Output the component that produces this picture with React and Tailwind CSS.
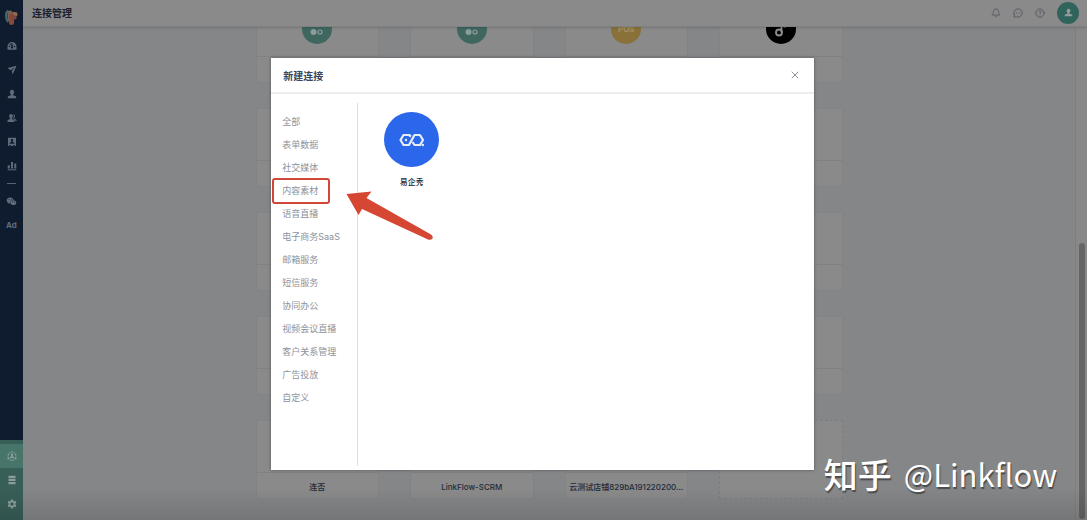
import React from "react";
import { Bell, MessageCircleMore, CircleHelp, X } from "lucide-react";
import { AiFillWechat } from "react-icons/ai";

const Svg = ({ className, children, box = "0 0 20 20" }) => (
  <svg viewBox={box} className={className} fill="currentColor" aria-hidden="true">
    {children}
  </svg>
);

const PersonShape = () => (
  <path d="M10 1.500c-2.600 0-4.200 1.900-4.200 4.400 0 2 .8 3.900 2.200 5v1.600L3.400 14C1.800 14.600 1.500 16 1.500 18.500h17c0-2.500-.3-3.900-1.900-4.500L12 12.500v-1.600c1.400-1.100 2.200-3 2.200-5 0-2.500-1.600-4.400-4.200-4.400z" />
);

const glyphs = {
  dashboard: (
    <path fillRule="evenodd" d="M10 2a9 9 0 0 0-9 9v6.500h18V11a9 9 0 0 0-9-9zM5 9.500a1.500 1.500 0 1 1 0 3 1.500 1.500 0 0 1 0-3zM6.500 5a1.500 1.500 0 1 1 0 3 1.500 1.500 0 0 1 0-3zM15 9.500a1.500 1.500 0 1 1 0 3 1.500 1.500 0 0 1 0-3zM9 4.500h2l.6 7a2.200 2.200 0 1 1-3.200 0z" />
  ),
  send: <path d="M19 1.500 1 6l6 4.500L15 5 9.500 12l1.800 7z" />,
  person: <PersonShape />,
  people: (
    <>
      <path d="M8 2C5.600 2 4.300 3.700 4.300 6c0 1.800.7 3.400 1.900 4.400V12l-3.700 1.500C1.200 14 .8 15.500.8 18h14.400c0-2.500-.4-4-1.700-4.500L9.800 12v-1.600c1.200-1 1.900-2.600 1.900-4.400C11.700 3.700 10.400 2 8 2z" />
      <path d="M12.500 2.500c2.300 0 3.600 1.400 3.600 3.600 0 1.600-.7 3-1.700 3.900v1.200l3 1.300c1.300.6 1.800 1.500 1.800 3.500h-2.700c-.3-2-1.200-3-2.500-3.600l-1.500-.7V10c1.400-2 1.700-5 0-7.500z" />
    </>
  ),
  bookmark: (
    <path fillRule="evenodd" d="M2 1.500h16v17l-4-2.500-4 2.500L6 16l-4 2.500zM10 4C8.500 4 7.600 5 7.600 6.500c0 1 .4 2 1.100 2.600v.7L6 11c-.8.400-1 1-1 2.300h10c0-1.300-.2-1.900-1-2.300l-2.700-1.200v-.7c.7-.6 1.100-1.600 1.100-2.600C12.400 5 11.500 4 10 4z" />
  ),
  chart: <path d="M1.500 8.500h4V15h-4zM8 2h4v13H8zM14.500 5h4v10h-4zM1.500 16.700h17v1.600h-17z" />,
  hub: (
    <>
      <circle cx="10" cy="7.500" r="2.300" />
      <path d="M5.800 14c.2-2.700 2-3.700 4.200-3.700s4 1 4.200 3.700z" />
      <path d="M7 2.500A8 8 0 0 0 2 11M13 2.500A8 8 0 0 1 18 11M5 17a8 8 0 0 0 10 0" fill="none" stroke="currentColor" strokeWidth="1.600" />
      <circle cx="10" cy="2" r="1.600" />
      <circle cx="2.800" cy="14.500" r="2" />
      <circle cx="17.200" cy="14.500" r="2" />
    </>
  ),
  rows: <path d="M3 1.500h14V6H3zM3 7.700h14v4.500H3zM3 14h14v4.500H3z" />,
  gear: (
    <path fillRule="evenodd" d="m8 1-.5 2.500-1.700 1L3.300 3.700l-2 3.500L3.200 9v2l-1.900 1.800 2 3.500 2.500-.8 1.700 1L8 19h4l.5-2.500 1.700-1 2.500.8 2-3.500-1.900-1.800V9l1.900-1.800-2-3.500-2.500.8-1.700-1L12 1zM10 6.600a3.400 3.400 0 1 1 0 6.800 3.400 3.400 0 0 1 0-6.800z" />
  ),
};

const NavButton = ({ name, label, active }) => (
  <button
    aria-label={label}
    className={
      active
        ? "flex h-6 w-full items-center justify-center bg-[#47756a] text-[#8fa69f]"
        : "flex h-6 w-full items-center justify-center"
    }
  >
    <Svg className="size-[10px]">{glyphs[name]}</Svg>
  </button>
);

const Logo = () => (
  <svg viewBox="0 0 26 34" className="h-[17px] w-[13px]" aria-hidden="true">
    <path d="M5 4C1 8 1 19 5 25" fill="none" stroke="#41696f" strokeWidth="4" strokeLinecap="round" />
    <rect x="5" y="3" width="10" height="22" rx="5" fill="#80604f" />
    <path d="M15 6h5.500a4.500 4.500 0 0 1 0 9H15z" fill="#8d6b4c" />
    <rect x="8" y="9" width="10" height="23" rx="5" fill="#8a473c" />
    <path d="M14 13h6a4 4 0 0 1-1 8h-4z" fill="#76493f" />
  </svg>
);

const Sidebar = () => (
  <nav className="flex w-[23px] shrink-0 flex-col bg-[#0f1c30] text-[#5f6a7a]">
    <div className="flex h-[34px] items-center justify-center">
      <Logo />
    </div>
    <NavButton name="dashboard" label="仪表盘" />
    <NavButton name="send" label="营销" />
    <NavButton name="person" label="用户" />
    <NavButton name="people" label="群组" />
    <NavButton name="bookmark" label="名片" />
    <NavButton name="chart" label="分析" />
    <hr className="mx-auto my-[5px] w-[9px] border-[#56606f]" />
    <button aria-label="微信" className="flex h-6 items-center justify-center">
      <AiFillWechat className="size-[11px]" />
    </button>
    <button className="h-6 text-[8px] leading-6 font-bold">Ad</button>
    <div className="mt-auto bg-[#385e58] pt-1 pb-1 text-[#8b9d9a]">
      <NavButton name="hub" label="连接" active />
      <NavButton name="rows" label="数据" />
      <NavButton name="gear" label="设置" />
    </div>
  </nav>
);

const Header = () => (
  <header className="relative z-10 flex h-[27px] shrink-0 items-center border-b border-[#7e7f80] bg-[#8a8a8a] pr-2 pl-[9px] shadow-sm">
    <h1 className="pb-px text-[10px] leading-4 font-bold text-[#19212f]">连接管理</h1>
    <div className="ml-auto flex items-center gap-3 pb-px text-[#4e535c]">
      <button aria-label="通知"><Bell className="size-[10px]" /></button>
      <button aria-label="消息"><MessageCircleMore className="size-[10px]" /></button>
      <button aria-label="帮助"><CircleHelp className="size-[10px]" /></button>
      <button aria-label="账户" className="flex size-[22px] items-center justify-center rounded-full bg-[#30635b] text-[#929b99]">
        <Svg className="size-[9px]"><PersonShape /></Svg>
      </button>
    </div>
  </header>
);

const DotsBadge = () => (
  <div className="flex size-[30px] items-center justify-center rounded-full bg-[#3f6760]">
    <svg viewBox="0 0 30 30" className="size-[30px]" aria-hidden="true">
      <circle cx="11.500" cy="18" r="3" fill="#8b9c99" />
      <circle cx="18" cy="18" r="2" fill="none" stroke="#8b9c99" strokeWidth="1.200" />
    </svg>
  </div>
);

const badges = [
  <DotsBadge />,
  <DotsBadge />,
  <div className="flex size-[30px] items-center justify-center rounded-full bg-[#8a713a] text-[8px] font-bold text-[#a3916a]">POS</div>,
  <div className="flex size-[30px] items-center justify-center rounded-full bg-black">
    <svg viewBox="0 0 30 30" className="size-[30px]" fill="none" stroke="#8f8f8f" strokeWidth="1.800" aria-hidden="true">
      <path d="M15.500 8v10.500M15.500 9c.5 2.500 2 3.500 4 3.800" />
      <circle cx="13" cy="18.500" r="3" />
    </svg>
  </div>,
];

const names = ["连否", "LinkFlow-SCRM", "云测试店铺829bA191220200...", ""];

const Card = ({ badge, name, dashed }) => (
  <article
    className={
      dashed
        ? "flex h-[79px] min-w-0 flex-col border border-dashed border-[#7c7d80] bg-[#8a8a8a]"
        : "flex h-[79px] min-w-0 flex-col border border-[#828385] bg-[#8a8a8a]"
    }
  >
    <div className="flex flex-1 items-center justify-center pb-1">{badge}</div>
    <div
      className={
        dashed
          ? "h-[26px]"
          : "h-[26px] border-t border-[#808183] pt-1 text-center text-[8px] leading-[21px] font-medium whitespace-nowrap text-[#232a38]"
      }
    >
      {name}
    </div>
  </article>
);

const categories = [
  "全部", "表单数据", "社交媒体", "内容素材", "语音直播", "电子商务SaaS", "邮箱服务",
  "短信服务", "协同办公", "视频会议直播", "客户关系管理", "广告投放", "自定义",
];

const Modal = () => (
  <section
    role="dialog"
    aria-label="新建连接"
    className="relative flex min-h-[412px] w-1/2 flex-col bg-white shadow-[0_0_3px_#55565a]"
  >
    <div className="flex h-9 items-center justify-between border-b-2 border-[#ededee] pr-[13px] pl-3">
      <h2 className="pt-px text-[10px] leading-4 font-bold text-[#3a465b]">新建连接</h2>
      <button aria-label="关闭" className="text-[#8d919c]"><X className="size-3" /></button>
    </div>
    <div className="flex flex-1 pt-[9px] pb-1">
      <ul className="w-[87px] shrink-0 border-r border-[#dcdee1] pt-[7px] pl-[11px]">
        {categories.map((c) => (
          <li key={c} className="relative flex h-[23px]">
            <button className="text-[9px] leading-[23px] whitespace-nowrap text-[#8d929c]">{c}</button>
            {c === "内容素材" && (
              <span className="pointer-events-none absolute -top-px -left-[10px] h-[26px] w-[58px] rounded-[3px] border-2 border-[#d0473a]" />
            )}
          </li>
        ))}
      </ul>
      <div className="pt-[9px] pl-[26px]">
        <button className="flex flex-col items-center">
          <span className="flex size-[55px] items-center justify-center rounded-full bg-[#2b67ea]">
            <svg viewBox="0 0 55 55" className="size-[55px]" fill="none" stroke="#e6eefc" strokeWidth="2.200" strokeLinejoin="round" aria-hidden="true">
              <path d="M27 24.500 25 23h-5.500L16.500 28l3 5H25l5.500-10H36l3 5-3 5h-5.500L28.500 30" />
              <circle cx="22" cy="28" r="1.200" fill="#e6eefc" stroke="none" />
              <circle cx="38.800" cy="33" r="1.300" fill="#e6eefc" stroke="none" />
            </svg>
          </span>
          <span className="mt-[7px] text-[8px] leading-4 font-medium text-[#222b3b]">易企秀</span>
        </button>
      </div>
    </div>
    <svg viewBox="0 0 87 50" className="pointer-events-none absolute top-[133px] left-[75px] h-[50px] w-[87px]" aria-hidden="true">
      <path d="M0.500 3 25.500 0.500 20.500 7 85 43.500Q87.500 45.500 86.500 47.500 85 49.500 82 48.500L16 18 12.500 24Z" fill="#d64733" />
    </svg>
  </section>
);

export default function App() {
  return (
    <div className="relative flex h-screen overflow-hidden bg-[#858688] font-['Inter','Noto_Sans_CJK_SC',sans-serif]">
      <Sidebar />
      <div className="flex min-w-0 flex-1 flex-col">
        <Header />
        <div className="flex min-h-0 flex-1">
          <main className="min-w-0 flex-1 overflow-hidden">
            <div className="mx-auto -mt-[23px] grid max-w-[587px] grid-cols-4 gap-x-[31px] gap-y-[25px]">
              {[0, 1, 2, 3, 4].map((row) =>
                names.map((name, col) => (
                  <Card
                    key={`${row}-${col}`}
                    badge={row === 0 ? badges[col] : null}
                    name={row === 4 ? name : ""}
                    dashed={row === 4 && col === 3}
                  />
                ))
              )}
            </div>
          </main>
          <div className="flex w-3 flex-col items-center justify-end border-l border-[#7e7f80] bg-[#888888] pb-px">
            <div className="h-[56%] w-[6px] rounded-full bg-[#656565]" />
          </div>
        </div>
      </div>
      <div className="pointer-events-none absolute inset-x-0 bottom-0 h-8 bg-linear-to-t from-black/12 to-transparent" />
      <div className="absolute inset-0 z-20 flex items-center justify-center pt-2 pr-0.5">
        <Modal />
      </div>
      <div className="pointer-events-none absolute right-[30px] bottom-5 z-30 flex items-center gap-3 font-['Noto_Sans_CJK_SC',sans-serif] leading-[52px] text-white [text-shadow:1px_2px_1px_#4a4a4a]">
        <span className="text-[34px] font-medium">知乎</span>
        <span className="text-[31px]">@Linkflow</span>
      </div>
    </div>
  );
}
